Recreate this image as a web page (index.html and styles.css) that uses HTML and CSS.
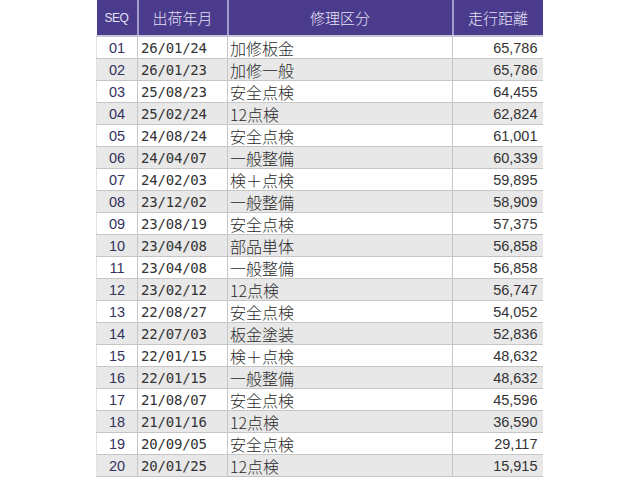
FILE: index.html
```html
<!DOCTYPE html>
<html lang="ja">
<head>
<meta charset="utf-8">
<link rel="stylesheet" href="styles.css">
</head>
<body>
<div class="wrap">
<table class="grid">
<colgroup><col class="c-seq"><col class="c-date"><col class="c-kind"><col class="c-dist"></colgroup>
<thead>
<tr><th class="h-seq">SEQ</th><th>出荷年月</th><th>修理区分</th><th>走行距離</th></tr>
</thead>
<tbody>
<tr><td class="seq">01</td><td class="date">26/01/24</td><td class="kind">加修板金</td><td class="dist">65,786</td></tr>
<tr><td class="seq">02</td><td class="date">26/01/23</td><td class="kind">加修一般</td><td class="dist">65,786</td></tr>
<tr><td class="seq">03</td><td class="date">25/08/23</td><td class="kind">安全点検</td><td class="dist">64,455</td></tr>
<tr><td class="seq">04</td><td class="date">25/02/24</td><td class="kind">12点検</td><td class="dist">62,824</td></tr>
<tr><td class="seq">05</td><td class="date">24/08/24</td><td class="kind">安全点検</td><td class="dist">61,001</td></tr>
<tr><td class="seq">06</td><td class="date">24/04/07</td><td class="kind">一般整備</td><td class="dist">60,339</td></tr>
<tr><td class="seq">07</td><td class="date">24/02/03</td><td class="kind">検＋点検</td><td class="dist">59,895</td></tr>
<tr><td class="seq">08</td><td class="date">23/12/02</td><td class="kind">一般整備</td><td class="dist">58,909</td></tr>
<tr><td class="seq">09</td><td class="date">23/08/19</td><td class="kind">安全点検</td><td class="dist">57,375</td></tr>
<tr><td class="seq">10</td><td class="date">23/04/08</td><td class="kind">部品単体</td><td class="dist">56,858</td></tr>
<tr><td class="seq">11</td><td class="date">23/04/08</td><td class="kind">一般整備</td><td class="dist">56,858</td></tr>
<tr><td class="seq">12</td><td class="date">23/02/12</td><td class="kind">12点検</td><td class="dist">56,747</td></tr>
<tr><td class="seq">13</td><td class="date">22/08/27</td><td class="kind">安全点検</td><td class="dist">54,052</td></tr>
<tr><td class="seq">14</td><td class="date">22/07/03</td><td class="kind">板金塗装</td><td class="dist">52,836</td></tr>
<tr><td class="seq">15</td><td class="date">22/01/15</td><td class="kind">検＋点検</td><td class="dist">48,632</td></tr>
<tr><td class="seq">16</td><td class="date">22/01/15</td><td class="kind">一般整備</td><td class="dist">48,632</td></tr>
<tr><td class="seq">17</td><td class="date">21/08/07</td><td class="kind">安全点検</td><td class="dist">45,596</td></tr>
<tr><td class="seq">18</td><td class="date">21/01/16</td><td class="kind">12点検</td><td class="dist">36,590</td></tr>
<tr><td class="seq">19</td><td class="date">20/09/05</td><td class="kind">安全点検</td><td class="dist">29,117</td></tr>
<tr><td class="seq">20</td><td class="date">20/01/25</td><td class="kind">12点検</td><td class="dist">15,915</td></tr>
</tbody>
</table>
</div>
</body>
</html>
```
FILE: styles.css
```css
html, body {
  margin: 0;
  padding: 0;
  background: #ffffff;
}
.wrap {
  padding-left: 96px;
}
.grid {
  border-collapse: collapse;
  table-layout: fixed;
  width: 446px;
  font-family: "Noto Sans CJK JP", sans-serif;
  color: #2a2a2a;
}
.c-seq { width: 41px; }
.c-date { width: 90px; }
.c-kind { width: 225px; }
.c-dist { width: 90px; }
.grid th {
  background: #4a3b8d;
  color: #e4e2f4;
  font-weight: 300;
  font-size: 15px;
  height: 35px;
  padding: 0;
  text-align: center;
  border-left: 2px solid #a39ccb;
  border-bottom: 2px solid #c9c6dc;
}
.grid th:first-child { border-left: 0; }
.grid th.h-seq {
  font-family: "Liberation Sans", sans-serif;
  font-weight: normal;
  font-size: 12px;
  letter-spacing: -0.5px;
}
.grid td {
  height: 21px;
  padding: 0;
  border: 1px solid #c6c6c6;
  border-top: 0;
  white-space: nowrap;
  overflow: hidden;
}
.grid tbody tr:nth-child(even) td { background: #e8e8e8; }
.seq {
  text-align: center;
  font-family: "Liberation Sans", sans-serif;
  font-size: 14.5px;
  color: #33335e;
  border-left-color: #e2e2e2 !important;
}
.date {
  font-family: "DejaVu Sans Mono", monospace;
  font-size: 14px;
  color: #333333;
  padding-left: 3px !important;
  letter-spacing: -0.2px;
}
.kind {
  font-size: 16px;
  font-weight: 300;
  padding-left: 2px !important;
  line-height: 20px;
}
.dist {
  text-align: right;
  font-family: "Liberation Sans", sans-serif;
  font-size: 14.5px;
  color: #333333;
  padding-right: 5px !important;
  border-right: 0 !important;
}
```
